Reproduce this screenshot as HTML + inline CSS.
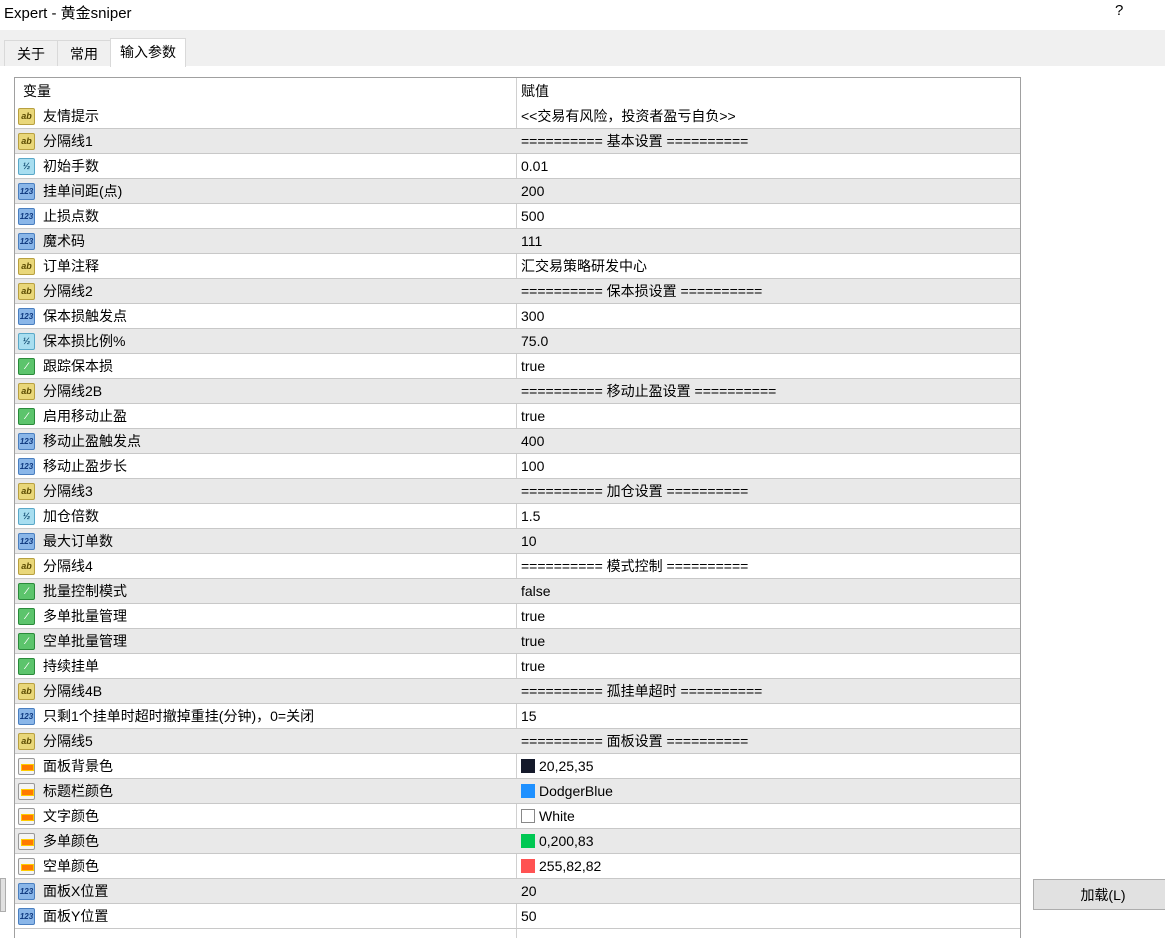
<!DOCTYPE html><html><head><meta charset="utf-8"><style>
body{margin:0;width:1165px;height:930px;overflow:hidden;background:#fff;font-family:"Liberation Sans","Noto Sans CJK SC",sans-serif;font-size:14px;color:#000;position:relative}
.title{position:absolute;left:4px;top:2px;font-size:15px}
.q{position:absolute;left:1115px;top:2px;font-size:15px}
.band{position:absolute;left:0;top:30px;width:1165px;height:36px;background:#f0f0f0}
.tab{position:absolute;top:40px;height:26px;border:1px solid #d9d9d9;border-bottom:none;background:#f0f0f0;line-height:26px;text-align:center;box-sizing:border-box}
.tab.a{background:#fff;top:38px;height:29px}
.tbl{position:absolute;left:14px;top:77px;width:1005px;height:860px;border-left:1px solid #a0a0a0;border-right:1px solid #a0a0a0;border-top:1px solid #a0a0a0}
.hdr{height:26px;line-height:27px;position:relative}
.r{height:24px;border-bottom:1px solid #c8c8c8;position:relative;line-height:25px}
.g{background:#e9e9e9}
.n{position:absolute;left:28px}
.v{position:absolute;left:506px}
.d{position:absolute;left:501px;top:0;bottom:0;border-left:1px solid #d0d0d0}
.i{position:absolute;left:3px;top:4px;width:17px;height:17px;border-radius:2px;font-size:9px;font-weight:bold;line-height:15px;text-align:center;box-sizing:border-box;border:1px solid}
.ab{background:#e9d77a;border-color:#b8a040;color:#5a4a00}
.n1{background:#8ab6e8;border-color:#4a7fc0;color:#103a80;font-size:8px}
.h{background:#a8def0;border-color:#5aa8c8;color:#104a70}
.b{background:#5cc46c;border-color:#2a8a3a;color:#fff}
.c{background:#f4f4f4;border-color:#999}
.c:after{content:"";position:absolute;left:2px;top:5px;width:11px;height:5px;background:#ff7a00;border:1px solid #ffcc00}
.sw{display:inline-block;width:14px;height:14px;vertical-align:-2px;margin-right:4px;box-sizing:border-box}
.btn{position:absolute;left:1033px;top:879px;width:140px;height:31px;background:#e1e1e1;border:1px solid #adadad;box-sizing:border-box;text-align:center;line-height:30px}
.lb{position:absolute;left:0;top:878px;width:4px;height:32px;background:#e1e1e1;border:1px solid #adadad}
</style></head><body>
<div class="title">Expert - 黄金sniper</div><div class="q">?</div>
<div class="band"></div>
<div class="tab" style="left:4px;width:54px">关于</div>
<div class="tab" style="left:57px;width:54px">常用</div>
<div class="tab a" style="left:110px;width:76px">输入参数</div>
<div class="lb"></div>
<div class="tbl">
<div class="d"></div>
<div class="hdr"><span style="position:absolute;left:8px">变量</span><span class="v">赋值</span></div>
<div class="r"><i class="i ab">ab</i><span class="n">友情提示</span><span class="v">&lt;&lt;交易有风险，投资者盈亏自负&gt;&gt;</span></div>
<div class="r g"><i class="i ab">ab</i><span class="n">分隔线1</span><span class="v">========== 基本设置 ==========</span></div>
<div class="r"><i class="i h">½</i><span class="n">初始手数</span><span class="v">0.01</span></div>
<div class="r g"><i class="i n1">123</i><span class="n">挂单间距(点)</span><span class="v">200</span></div>
<div class="r"><i class="i n1">123</i><span class="n">止损点数</span><span class="v">500</span></div>
<div class="r g"><i class="i n1">123</i><span class="n">魔术码</span><span class="v">111</span></div>
<div class="r"><i class="i ab">ab</i><span class="n">订单注释</span><span class="v">汇交易策略研发中心</span></div>
<div class="r g"><i class="i ab">ab</i><span class="n">分隔线2</span><span class="v">========== 保本损设置 ==========</span></div>
<div class="r"><i class="i n1">123</i><span class="n">保本损触发点</span><span class="v">300</span></div>
<div class="r g"><i class="i h">½</i><span class="n">保本损比例%</span><span class="v">75.0</span></div>
<div class="r"><i class="i b">⁄</i><span class="n">跟踪保本损</span><span class="v">true</span></div>
<div class="r g"><i class="i ab">ab</i><span class="n">分隔线2B</span><span class="v">========== 移动止盈设置 ==========</span></div>
<div class="r"><i class="i b">⁄</i><span class="n">启用移动止盈</span><span class="v">true</span></div>
<div class="r g"><i class="i n1">123</i><span class="n">移动止盈触发点</span><span class="v">400</span></div>
<div class="r"><i class="i n1">123</i><span class="n">移动止盈步长</span><span class="v">100</span></div>
<div class="r g"><i class="i ab">ab</i><span class="n">分隔线3</span><span class="v">========== 加仓设置 ==========</span></div>
<div class="r"><i class="i h">½</i><span class="n">加仓倍数</span><span class="v">1.5</span></div>
<div class="r g"><i class="i n1">123</i><span class="n">最大订单数</span><span class="v">10</span></div>
<div class="r"><i class="i ab">ab</i><span class="n">分隔线4</span><span class="v">========== 模式控制 ==========</span></div>
<div class="r g"><i class="i b">⁄</i><span class="n">批量控制模式</span><span class="v">false</span></div>
<div class="r"><i class="i b">⁄</i><span class="n">多单批量管理</span><span class="v">true</span></div>
<div class="r g"><i class="i b">⁄</i><span class="n">空单批量管理</span><span class="v">true</span></div>
<div class="r"><i class="i b">⁄</i><span class="n">持续挂单</span><span class="v">true</span></div>
<div class="r g"><i class="i ab">ab</i><span class="n">分隔线4B</span><span class="v">========== 孤挂单超时 ==========</span></div>
<div class="r"><i class="i n1">123</i><span class="n">只剩1个挂单时超时撤掉重挂(分钟)，0=关闭</span><span class="v">15</span></div>
<div class="r g"><i class="i ab">ab</i><span class="n">分隔线5</span><span class="v">========== 面板设置 ==========</span></div>
<div class="r"><i class="i c"></i><span class="n">面板背景色</span><span class="v"><span class="sw" style="background:#14192a"></span>20,25,35</span></div>
<div class="r g"><i class="i c"></i><span class="n">标题栏颜色</span><span class="v"><span class="sw" style="background:#1e90ff"></span>DodgerBlue</span></div>
<div class="r"><i class="i c"></i><span class="n">文字颜色</span><span class="v"><span class="sw" style="background:#fff;border:1px solid #888"></span>White</span></div>
<div class="r g"><i class="i c"></i><span class="n">多单颜色</span><span class="v"><span class="sw" style="background:#00c853"></span>0,200,83</span></div>
<div class="r"><i class="i c"></i><span class="n">空单颜色</span><span class="v"><span class="sw" style="background:#ff5252"></span>255,82,82</span></div>
<div class="r g"><i class="i n1">123</i><span class="n">面板X位置</span><span class="v">20</span></div>
<div class="r"><i class="i n1">123</i><span class="n">面板Y位置</span><span class="v">50</span></div>
</div>
<div class="btn">加载(L)</div>
</body></html>
